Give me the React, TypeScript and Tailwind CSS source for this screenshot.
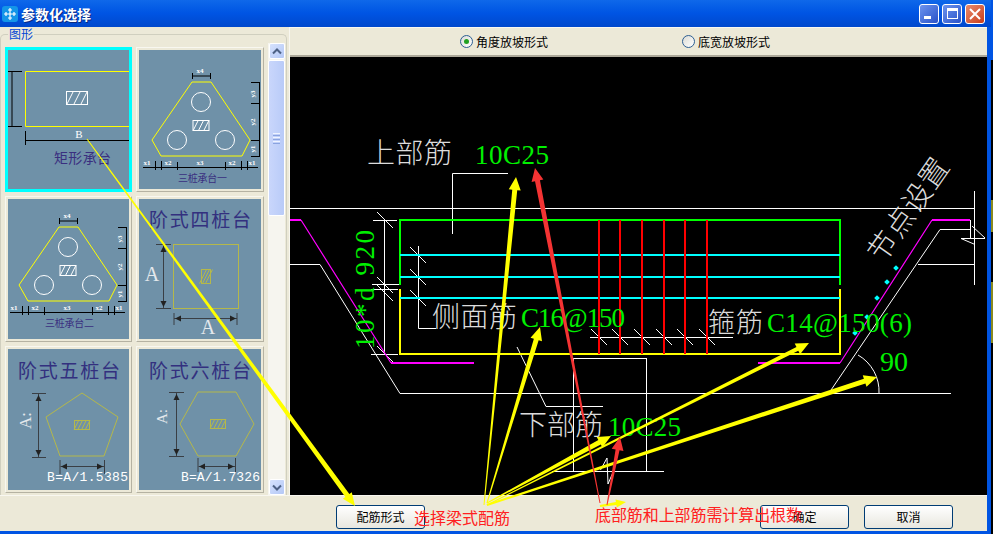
import React from "react";

const SANS = "font-['Noto_Sans_CJK_SC','Liberation_Sans',sans-serif]";
const SERIF = "font-['Liberation_Serif','Noto_Sans_CJK_SC',serif]";

function Arrow({ x1, y1, x2, y2, w1 = 1, w2 = 5, hw = 12, hl = 13, c = "#ffff00" }: { x1: number; y1: number; x2: number; y2: number; w1?: number; w2?: number; hw?: number; hl?: number; c?: string }) {
  const len = Math.hypot(x2 - x1, y2 - y1);
  const dx = (x2 - x1) / len;
  const dy = (y2 - y1) / len;
  const nx = -dy;
  const ny = dx;
  const bx = x2 - dx * hl;
  const by = y2 - dy * hl;
  const p = [
    [x1 + (nx * w1) / 2, y1 + (ny * w1) / 2],
    [bx + (nx * w2) / 2, by + (ny * w2) / 2],
    [bx + (nx * hw) / 2, by + (ny * hw) / 2],
    [x2, y2],
    [bx - (nx * hw) / 2, by - (ny * hw) / 2],
    [bx - (nx * w2) / 2, by - (ny * w2) / 2],
    [x1 - (nx * w1) / 2, y1 - (ny * w1) / 2],
  ];
  return <polygon points={p.map((q) => q.join(",")).join(" ")} fill={c} />;
}

function Hatch({ x, y, w, h, c = "#ffffff", n = 3 }: { x: number; y: number; w: number; h: number; c?: string; n?: number }) {
  const lines = [];
  for (let i = 0; i < n; i++) {
    const t = ((i + 0.5) / n) * w;
    lines.push(<line key={i} x1={x + t - h / 4} y1={y + h} x2={x + t + h / 4} y2={y} stroke={c} strokeWidth={1} />);
  }
  return (
    <g>
      <rect x={x} y={y} width={w} height={h} fill="none" stroke={c} strokeWidth={1} />
      {lines}
    </g>
  );
}

function L({ d, c = "#000", w = 1 }: { d: string; c?: string; w?: number }) {
  return <path d={d} fill="none" stroke={c} strokeWidth={w} />;
}

function Tri({ label }: { label: string }) {
  const small = { fill: "#ffffff", fontSize: 7, fontWeight: 700, textAnchor: "middle" as const };
  return (
    <g className={SERIF}>
      <polygon points="192,81 211,81 250,139 242,155 161,155 152,139" fill="none" stroke="#ffff00" strokeWidth={1} />
      <circle cx={201} cy={101} r={9.5} fill="none" stroke="#fff" />
      <circle cx={177} cy={139} r={9.5} fill="none" stroke="#fff" />
      <circle cx={225} cy={139} r={9.5} fill="none" stroke="#fff" />
      <Hatch x={193} y={119.5} w={16} h={10} />
      <L d="M192.5 72V78M192.5 75H210.5M210.5 72V78" />
      <L d="M259.5 81V155M251 81.5H260M251 102.5H260M251 139.5H260M251 155.5H260" />
      <L d="M143 166.5H258M155.5 160V169M161.5 160V169M177.5 161V169M225.5 161V169M241.5 160V169M247.5 160V169" />
      <text x={200} y={72} {...small}>x4</text>
      <text transform="translate(255,93) rotate(-90)" {...small}>y3</text>
      <text transform="translate(255,121) rotate(-90)" {...small}>y2</text>
      <text transform="translate(255,148) rotate(-90)" {...small}>y1</text>
      <text x={147} y={164} {...small}>x1</text>
      <text x={168} y={164} {...small}>x2</text>
      <text x={200} y={164} {...small}>x3</text>
      <text x={232} y={164} {...small}>x2</text>
      <text x={252} y={164} {...small}>x1</text>
      <text x={178} y={181} fontSize={10} fill="#3a2f80" textLength={49} className={SANS}>{label}</text>
    </g>
  );
}

function Title({ x, y, children }: { x: number; y: number; children: string }) {
  return (
    <text x={x} y={y} fontSize={19} fill="#33307f" textLength={102} className={SANS}>
      {children}
    </text>
  );
}

function Dim({ d }: { d: string }) {
  return <L d={d} c="#3a3f45" w={1} />;
}

function Card({ box, selected, children }: { box: string; selected?: boolean; children: React.ReactNode }) {
  return (
    <div className={selected ? "border-[3px] border-[#00ffff] bg-[#6f91a8] min-h-0" : "border border-[#f8f7f0] border-r-[#b5b2a2] border-b-[#b5b2a2] p-[2px] bg-[#ece9d8] min-h-0"}>
      <svg viewBox={box} preserveAspectRatio="xMinYMin slice" className="block w-full h-full bg-[#6f91a8]">
        {children}
      </svg>
    </div>
  );
}

function Scrollbar() {
  const btn = "h-[16px] mx-[0.5px] rounded-[2px] border border-white bg-linear-to-br from-[#d6e2fd] to-[#b4c8f6] flex items-center justify-center shrink-0";
  return (
    <div className="w-[17px] flex flex-col bg-[#f6f5ef] mt-[16px]">
      <div className={btn}>
        <svg width="10" height="7" viewBox="0 0 10 7"><path d="M1 5.5L5 1.5L9 5.5" fill="none" stroke="#4d6185" strokeWidth="2" /></svg>
      </div>
      <div className="mt-[1px] h-[156px] rounded-[2px] border border-white bg-linear-to-r from-[#c9d6fb] to-[#b9cbf8] flex flex-col items-center justify-center gap-[1px] shrink-0">
        <div className="w-[7px] h-px bg-[#eef3ff]" />
        <div className="w-[7px] h-px bg-[#8ba4e0]" />
        <div className="w-[7px] h-px bg-[#eef3ff]" />
        <div className="w-[7px] h-px bg-[#8ba4e0]" />
        <div className="w-[7px] h-px bg-[#eef3ff]" />
        <div className="w-[7px] h-px bg-[#8ba4e0]" />
      </div>
      <div className="flex-1" />
      <div className={btn}>
        <svg width="10" height="7" viewBox="0 0 10 7"><path d="M1 1.5L5 5.5L9 1.5" fill="none" stroke="#4d6185" strokeWidth="2" /></svg>
      </div>
    </div>
  );
}

function LeftPanel() {
  return (
    <div className="w-[289px] shrink-0 relative flex pl-[5px] pr-[3px]">
      <div className="absolute left-0 right-[2px] top-[7px] bottom-0 border border-b-0 border-[#d0cfbf] rounded-t-[5px] pointer-events-none" />
      <span className={`absolute left-[8px] top-0 px-px bg-[#ece9d8] text-[12px] leading-[14px] text-[#0046d5] ${SANS}`}>图形</span>
      <div className="w-[259px] mt-[20px] mb-[2px] grid grid-cols-[127px_128px] grid-rows-[145px_146px_147px] gap-x-[4px] gap-y-[4px]">
        <Card box="8 50 121 139" selected>
          <L d="M130 71.5H25.5V126.5H130" c="#ffff00" />
          <Hatch x={66.5} y={91.5} w={21} h={13} />
          <L d="M8 71.5H22M12 71.5V126.5M8 126.5H22" />
          <L d="M25.5 131V145M25.5 140.5H130" />
          <text x={79} y={138} textAnchor="middle" fontSize={11} fill="#fff" className={SERIF}>B</text>
          <text x={54} y={163} fontSize={14} fill="#3a2f80" textLength={57} className={SANS}>矩形承台</text>
        </Card>
        <Card box="139 49 122 140">
          <Tri label="三桩承台一" />
        </Card>
        <Card box="141 53 122 140">
          <Tri label="三桩承台二" />
        </Card>
        <Card box="139 199 122 140">
          <Title x={149} y={227}>阶式四桩台</Title>
          <rect x={173.5} y={244.5} width={65} height={64} fill="none" stroke="#b5b84a" />
          <Hatch x={201.5} y={269.5} w={9} h={14} c="#b5b84a" />
          <Dim d="M156 244.5H171M163.5 245V308M156 308.5H171M174 313V325M174 318.5H237M237 313V325" />
          <polygon points="163.5,246 160.5,252 166.5,252" fill="#222" />
          <polygon points="163.5,307 160.5,301 166.5,301" fill="#222" />
          <polygon points="175,318.5 181,315.5 181,321.5" fill="#222" />
          <polygon points="236,318.5 230,315.5 230,321.5" fill="#222" />
          <text x={152} y={281} textAnchor="middle" fontSize={20} fill="#e4e8ec" className={SERIF}>A</text>
          <text x={208} y={334} textAnchor="middle" fontSize={20} fill="#e4e8ec" className={SERIF}>A</text>
        </Card>
        <Card box="8 349 121 141">
          <Title x={18} y={378}>阶式五桩台</Title>
          <polygon points="82,393 118,417 104,456 60,456 46,417" fill="none" stroke="#b5b84a" />
          <Hatch x={74.5} y={420.5} w={15} h={9} c="#b5b84a" n={4} />
          <Dim d="M32 393.5H46M38.5 394V457M32 457.5H46M60 460V474M60.5 466.5H104M104.5 460V474" />
          <polygon points="38.5,395 35.5,401 41.5,401" fill="#222" />
          <polygon points="38.5,456 35.5,450 41.5,450" fill="#222" />
          <polygon points="61,466.5 67,463.5 67,469.5" fill="#222" />
          <polygon points="103,466.5 97,463.5 97,469.5" fill="#222" />
          <text transform="translate(31,429) rotate(-90)" fontSize={17} fill="#e4e8ec" className={SERIF}>A:</text>
          <text x={47} y={481} fontSize={13} fill="#ffffff" textLength={81} className="font-['Liberation_Mono',monospace]">B=A/1.5385</text>
        </Card>
        <Card box="139 349 122 141">
          <Title x={149} y={378}>阶式六桩台</Title>
          <polygon points="198,392 236,392 254,424 236,456 198,456 180,424" fill="none" stroke="#b5b84a" />
          <Hatch x={210.5} y={419.5} w={15} h={9} c="#b5b84a" n={4} />
          <Dim d="M169 392.5H184M176.5 393V456M169 456.5H184M198 458V472M198.5 466.5H235M235.5 458V472" />
          <polygon points="176.5,394 173.5,400 179.5,400" fill="#222" />
          <polygon points="176.5,455 173.5,449 179.5,449" fill="#222" />
          <polygon points="199,466.5 205,463.5 205,469.5" fill="#222" />
          <polygon points="234,466.5 228,463.5 228,469.5" fill="#222" />
          <text transform="translate(167,424) rotate(-90)" fontSize={15} fill="#e4e8ec" className={SERIF}>A:</text>
          <text x={181} y={481} fontSize={13} fill="#ffffff" textLength={79} className="font-['Liberation_Mono',monospace]">B=A/1.7326</text>
        </Card>
      </div>
      <div className="w-[4px]" />
      <Scrollbar />
    </div>
  );
}

function Radio({ checked, label }: { checked?: boolean; label: string }) {
  return (
    <div className="flex items-center gap-[3px]">
      <div className="w-[13px] h-[13px] rounded-full border border-[#2c5f93] bg-linear-to-br from-[#dcdcd5] to-white flex items-center justify-center">
        {checked && <div className="w-[5px] h-[5px] rounded-full bg-[#21a121]" />}
      </div>
      <span className={`text-[12px] leading-[14px] text-black ${SANS}`}>{label}</span>
    </div>
  );
}

function Ticks({ pts }: { pts: [number, number][] }) {
  return <L c="#fff" d={pts.map(([x, y]) => `M${x - 8} ${y - 8}L${x + 8} ${y + 8}`).join("")} />;
}

function Drawing() {
  const cjk = { fill: "#dcdcdc", fontWeight: 300, className: SANS };
  const green = { fill: "#00f000", className: SERIF };
  return (
    <svg viewBox="290 57 697 438" className="block w-[697px] h-[438px] bg-black">
      {/* construction lines */}
      <L c="#fff" d="M290 208.5H974M290 264.5H320L400 393.5H951M829 393L940 229.5H970M974.5 191V285M918 264.5H974M970.5 220V238M961 238.5H985M961 238.5L975 244.5M972 226L985 238" />
      <L c="#fff" d="M452.5 173.5H508M452.5 173.5V234M418.5 246V328.5H436M373 220.5H397M384.5 220V354M372 284.5H400M371 289.5H398M371 354.5H398M590 337.5H733" />
      <L c="#fff" d="M517 347L546 406.5H603M573.5 358V471M646.5 358V471M573 358.5H647M552 471.5H664M600.5 470L607 458L608 484L614 470" />
      <L c="#fff" d="M858 355A42 42 0 0 1 879 393.5" />
      <Ticks pts={[[599, 337], [620, 337], [642, 337], [664, 337], [685, 337], [707, 337], [418, 255], [418, 277], [418, 298], [385, 220], [385, 285], [385, 293], [385, 354]]} />
      {/* slab outline */}
      <L c="#ff00ff" w={2} d="M290 220H301M391 363H474M758 363H840M932 220H970" />
      <L c="#ff00ff" w={1.2} d="M301 220L391 363M840 363L932 220" />
      {/* rebar */}
      <L c="#00ff00" w={2} d="M400 285V220H840V285" />
      <L c="#ffff00" w={2} d="M400 289V354H840V289" />
      <L c="#00ffff" w={2} d="M400 255H840M400 277H840M400 298H840" />
      <L c="#ff0000" w={2} d="M599 220V354M620 220V354M642 220V354M664 220V354M685 220V354M707 220V354" />
      {[[896, 268], [887, 282], [877, 298], [867, 317], [855, 333]].map(([x, y]) => (
        <rect key={x} x={x - 2} y={y - 2} width={4} height={4} fill="#00ffff" transform={`rotate(45 ${x} ${y})`} />
      ))}
      {/* annotations */}
      <text x={367} y={163} fontSize={28} textLength={85} {...cjk}>上部筋</text>
      <text x={475} y={164} fontSize={27} textLength={74} {...green}>10C25</text>
      <text x={432} y={327} fontSize={28} textLength={85} {...cjk}>侧面筋</text>
      <text x={521} y={327} fontSize={27} textLength={104} {...green}>C16@150</text>
      <text x={708} y={332} fontSize={27} textLength={55} {...cjk}>箍筋</text>
      <text x={767} y={332} fontSize={27} textLength={145} {...green}>C14@150(6)</text>
      <text x={519} y={435} fontSize={28} textLength={84} {...cjk}>下部筋</text>
      <text x={608} y={436} fontSize={27} textLength={73} {...green}>10C25</text>
      <text x={880} y={371} fontSize={28} textLength={28} {...green}>90</text>
      <text transform="translate(374,349) rotate(-90)" fontSize={27} textLength={119} {...green}>10*d 920</text>
      <text transform="translate(883,264) rotate(-55)" fontSize={29} textLength={118} {...cjk}>节点设置</text>
    </svg>
  );
}

function RightPanel() {
  return (
    <div className="flex-1 flex flex-col min-w-0 border-l border-[#f8f7f0]">
      <div className="h-[30px] shrink-0 flex items-center border-b-2 border-[#aca899] border-t border-t-[#f8f7f0] pl-[170px] gap-[134px]">
        <Radio checked label="角度放坡形式" />
        <Radio label="底宽放坡形式" />
      </div>
      <Drawing />
    </div>
  );
}

function XpButton({ label, className = "" }: { label: string; className?: string }) {
  return (
    <button className={`w-[89px] h-[24px] rounded-[3px] border border-[#003c74] bg-linear-to-b from-white to-[#e8e7df] text-[12px] text-black ${SANS} ${className}`}>
      {label}
    </button>
  );
}

function WinButton({ red, children }: { red?: boolean; children: React.ReactNode }) {
  return (
    <div className={`w-[20px] h-[20px] rounded-[3px] border border-white flex items-center justify-center ${red ? "bg-linear-to-br from-[#e88a6c] to-[#c93a12]" : "bg-linear-to-br from-[#6d93ee] to-[#2a51c8]"}`}>
      {children}
    </div>
  );
}

export default function App() {
  return (
    <div className={`relative w-[993px] h-[534px] overflow-hidden flex bg-black ${SANS}`}>
      <div className="w-[991px] shrink-0 flex flex-col bg-[#0054e3]">
        <div className="h-[27px] shrink-0 flex items-center pl-[2px] pr-[1px] bg-linear-to-b from-[#0f68ea] via-[#0054e3] to-[#0048cc]">
          <svg width="16" height="18" viewBox="0 0 16 18" className="shrink-0">
            <rect x="0" y="1" width="16" height="16" rx="3" fill="#1495e8" />
            <path d="M8 3V15M2 9H14M4 7V11M12 7V11M6 5H10M6 13H10" stroke="#fff" strokeWidth="1.2" fill="none" />
          </svg>
          <span className="ml-[3px] text-[14px] leading-none font-bold text-white [text-shadow:1px_1px_0_#0a2a80]">参数化选择</span>
          <div className="ml-auto flex gap-[3px] mr-[5px]">
            <WinButton>
              <div className="w-[7px] h-[3px] bg-white mt-[8px] mr-[4px]" />
            </WinButton>
            <WinButton>
              <div className="w-[11px] h-[11px] border border-white border-t-[3px]" />
            </WinButton>
            <WinButton red>
              <svg width="12" height="12" viewBox="0 0 12 12"><path d="M1 1L11 11M11 1L1 11" stroke="#fff" strokeWidth="2" /></svg>
            </WinButton>
          </div>
        </div>
        <div className="flex-1 min-h-0 mr-[4px] mb-[3px] bg-[#ece9d8] flex flex-col">
          <div className="h-[468px] shrink-0 flex">
            <LeftPanel />
            <RightPanel />
          </div>
          <div className="flex-1 border-t border-t-[#f8f7f0] flex items-center pt-[6px]">
            <XpButton label="配筋形式" className="ml-[336px]" />
            <XpButton label="确定" className="ml-[335px]" />
            <XpButton label="取消" className="ml-[15px]" />
          </div>
        </div>
      </div>
      <div className="w-[2px] flex flex-col bg-black">
        <div className="h-[60px] bg-[#0054e3]" />
        <div className="h-[140px]" />
        <div className="h-[32px] bg-[#8a8a1e]" />
        <div className="h-[50px]" />
        <div className="h-[61px] bg-[#8a8a1e]" />
      </div>
      {/* hand-drawn annotation layer lying over the whole window */}
      <svg viewBox="0 0 993 534" className="absolute inset-0 w-[993px] h-[534px] pointer-events-none">
        <Arrow x1={87} y1={139} x2={355} y2={506} w1={1} w2={5} hw={11} hl={13} />
        <Arrow x1={484} y1={505} x2={516} y2={177} w1={1} w2={5} />
        <Arrow x1={487} y1={503} x2={540} y2={327} w1={1} w2={5} />
        <Arrow x1={487} y1={503} x2={611} y2={436} w1={1} w2={5} />
        <Arrow x1={487} y1={505} x2={809} y2={343} w1={1} w2={4} />
        <Arrow x1={487} y1={505} x2={877} y2={377} w1={2} w2={5} />
        <Arrow x1={600} y1={506} x2={626} y2={502} w1={2} w2={3} hw={8} hl={10} />
        <Arrow x1={600} y1={503} x2={535} y2={168} w1={1} w2={5} c="#f43333" />
        <Arrow x1={607} y1={505} x2={620} y2={437} w1={1} w2={4} c="#f43333" />
        <text x={414} y={524} fontSize={16} fill="#ff2020" textLength={96} className={SANS}>选择梁式配筋</text>
        <text x={595} y={521} fontSize={16} fill="#ff2020" textLength={207} className={SANS}>底部筋和上部筋需计算出根数</text>
      </svg>
    </div>
  );
}
